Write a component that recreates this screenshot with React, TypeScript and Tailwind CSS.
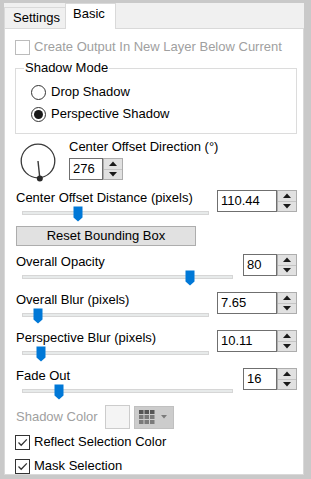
import React from "react";

const FONT = "font-['Liberation_Sans',Arial,sans-serif]";

function SpinBox({ value, wide }: { value: string; wide?: boolean }) {
  return (
    <div className="flex h-[22px]">
      <div
        className={`${wide ? "w-[60px]" : "w-[34px]"} h-[22px] border border-[#6f6f6f] bg-white pl-[3px] text-[13px] leading-[20px] text-black`}
      >
        {value}
      </div>
      <div className="flex h-[22px] w-[20px] flex-col border border-[#adadad] bg-[#e1e1e1]">
        <div className="flex flex-1 items-center justify-center border-b border-[#c4c4c4]">
          <svg width="8" height="5" viewBox="0 0 8 5">
            <polygon points="0,5 8,5 4,0.5" fill="#1a1a1a" />
          </svg>
        </div>
        <div className="flex flex-1 items-center justify-center">
          <svg width="8" height="5" viewBox="0 0 8 5">
            <polygon points="0,0 8,0 4,4.5" fill="#1a1a1a" />
          </svg>
        </div>
      </div>
    </div>
  );
}

function SliderBlock({
  label,
  value,
  wide,
  thumb,
}: {
  label: string;
  value: string;
  wide?: boolean;
  thumb: number;
}) {
  return (
    <div className="flex h-[32px] items-start justify-between">
      <div className="flex flex-col">
        <div className="h-[16px] pl-px text-[13px] leading-[16px] text-black">{label}</div>
        <div className={`relative ml-[7px] h-[16px] ${wide ? "w-[187px]" : "w-[211px]"}`}>
          <div className="mt-[5px] h-[4px] border border-[#d6d6d6] bg-[#e7eaea]" />
          <svg
            className="absolute top-0"
            style={{ left: thumb }}
            width="10"
            height="16"
            viewBox="0 0 10 16"
          >
            <polygon points="0.5,0.5 9.5,0.5 9.5,11.5 5,15.5 0.5,11.5" fill="#0078d7" />
          </svg>
        </div>
      </div>
      <SpinBox value={value} wide={wide} />
    </div>
  );
}

function CheckRow({ label, checked, disabled }: { label: string; checked?: boolean; disabled?: boolean }) {
  return (
    <div className="flex h-[16px] items-center gap-[4px]">
      <div
        className={`flex h-[15px] w-[15px] items-center justify-center border bg-white ${
          disabled ? "border-[#bcbcbc]" : "border-[#333333]"
        }`}
      >
        {checked && (
          <svg width="13" height="13" viewBox="0 0 13 13">
            <path d="M2.5 6.5 L5.2 9.2 L10.8 3.4" fill="none" stroke="#333333" strokeWidth="1.3" />
          </svg>
        )}
      </div>
      <span className={`text-[13px] leading-[16px] ${disabled ? "text-[#a0a0a0]" : "text-black"}`}>{label}</span>
    </div>
  );
}

function Radio({ label, checked }: { label: string; checked?: boolean }) {
  return (
    <div className="flex h-[18px] items-center gap-[5px]">
      <div className="flex h-[15px] w-[15px] items-center justify-center rounded-full border border-[#333333] bg-white">
        {checked && <div className="h-[9px] w-[9px] rounded-full bg-[#1a1a1a]" />}
      </div>
      <span className="text-[13px] leading-[16px] text-black">{label}</span>
    </div>
  );
}

function Dial() {
  const a = (276 * Math.PI) / 180;
  const cx = 21;
  const cy = 22;
  const x = cx + Math.cos(a) * 17.5;
  const y = cy - Math.sin(a) * 17.5;
  return (
    <svg width="40" height="44" viewBox="0 0 40 44">
      <circle cx={cx} cy={cy} r="16.8" fill="none" stroke="#3a3a3a" strokeWidth="1.3" />
      <line x1={cx} y1={cy} x2={x} y2={y} stroke="#3a3a3a" strokeWidth="1.4" />
      <circle cx={x} cy={y} r="3" fill="#2a2a2a" />
    </svg>
  );
}

function GridIcon() {
  const cells = [];
  for (let r = 0; r < 3; r++) {
    for (let c = 0; c < 3; c++) {
      cells.push(
        <rect key={`${r}-${c}`} x={c * 5.5} y={r * 5} width="4.5" height="4" fill={r === 0 ? "#555555" : "#7a7a7a"} />
      );
    }
  }
  return (
    <svg width="16" height="14" viewBox="0 0 16 14">
      {cells}
    </svg>
  );
}

export default function App() {
  return (
    <div className={`flex h-[479px] w-[311px] flex-col bg-[#c9c9c9] pb-[5px] pl-[4px] pr-[7px] pt-[3px] ${FONT}`}>
      <div className="flex flex-1 flex-col bg-[#f0f0f0]">
        {/* tabs */}
        <div className="flex h-[25px] items-end">
          <div className="flex h-[21px] w-[61px] items-center border-l border-t border-[#d9d9d9] pl-[8px] text-[13px] text-black">
            Settings
          </div>
          <div className="relative z-10 -mb-px flex h-[26px] w-[51px] items-start border-x border-t border-[#d9d9d9] bg-white pl-[7px] pt-[2px] text-[13px] leading-[16px] text-black">
            Basic
          </div>
        </div>

        {/* page */}
        <div className="flex flex-1 flex-col overflow-hidden border border-[#d9d9d9] bg-white pl-[10px] pr-[6px]">
          <div className="mt-[10px]">
            <CheckRow label="Create Output In New Layer Below Current" disabled />
          </div>

          <fieldset className="mt-[5px] border border-[#dcdcdc] pb-[10px]">
            <legend className="ml-[8px] px-[1px] text-[13px] leading-[16px] text-black">Shadow Mode</legend>
            <div className="mt-[7px] flex flex-col gap-[4px] pl-[15px]">
              <Radio label="Drop Shadow" />
              <Radio label="Perspective Shadow" checked />
            </div>
          </fieldset>

          <div className="mt-[5px] flex h-[44px]">
            <div className="ml-[2px]">
              <Dial />
            </div>
            <div className="ml-[12px] flex flex-col">
              <div className="h-[16px] text-[13px] leading-[16px] text-black">Center Offset Direction (°)</div>
              <div className="mt-[3px]">
                <SpinBox value="276" />
              </div>
            </div>
          </div>

          <div className="mt-[7px]">
            <SliderBlock label="Center Offset Distance (pixels)" value="110.44" wide thumb={51} />
          </div>

          <button className="ml-px mt-[4px] h-[20px] w-[180px] border border-[#adadad] bg-[#e1e1e1] text-[13px] leading-[18px] text-black">
            Reset Bounding Box
          </button>

          <div className="mt-[8px]">
            <SliderBlock label="Overall Opacity" value="80" thumb={163} />
          </div>
          <div className="mt-[6px]">
            <SliderBlock label="Overall Blur (pixels)" value="7.65" wide thumb={11} />
          </div>
          <div className="mt-[6px]">
            <SliderBlock label="Perspective Blur (pixels)" value="10.11" wide thumb={14} />
          </div>
          <div className="mt-[6px]">
            <SliderBlock label="Fade Out" value="16" thumb={32} />
          </div>

          <div className="mt-[5px] flex h-[24px] items-center">
            <span className="w-[90px] pl-px text-[13px] leading-[16px] text-[#a0a0a0]">Shadow Color</span>
            <div className="h-[24px] w-[25px] border border-[#cccccc] bg-[#f4f4f4]" />
            <div className="ml-[4px] flex h-[23px] w-[40px] items-center gap-[6px] border border-[#c0c0c0] bg-[#cccccc] pl-[4px]">
              <GridIcon />
              <svg width="6" height="4" viewBox="0 0 6 4">
                <polygon points="0,0 6,0 3,3.5" fill="#7a7a7a" />
              </svg>
            </div>
          </div>

          <div className="mt-[5px]">
            <CheckRow label="Reflect Selection Color" checked />
          </div>
          <div className="mt-[8px]">
            <CheckRow label="Mask Selection" checked />
          </div>
        </div>
      </div>
    </div>
  );
}
